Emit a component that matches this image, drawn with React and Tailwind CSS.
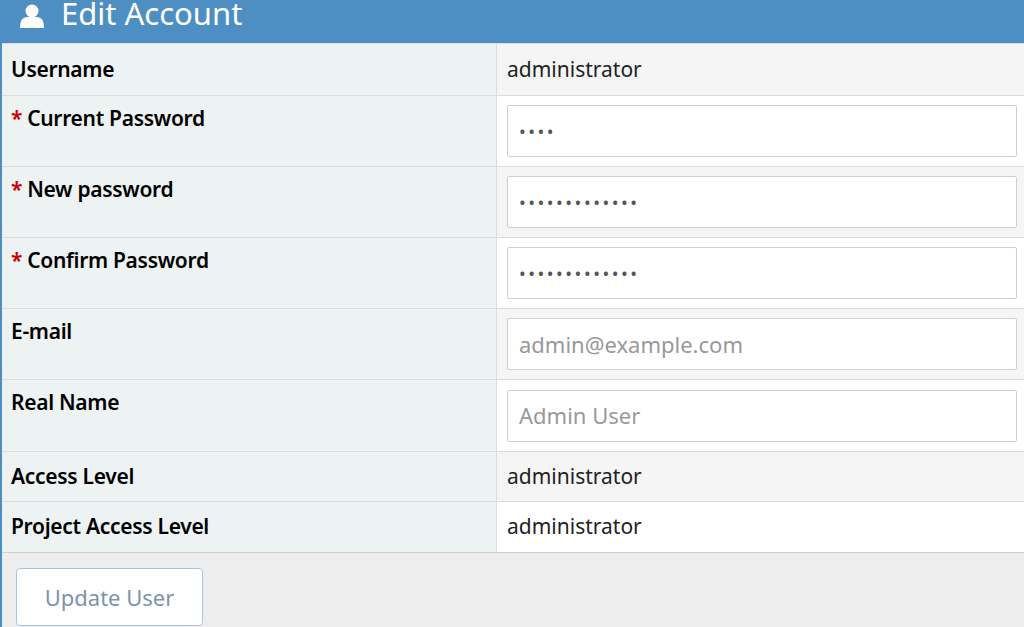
export default function App() {
  const rows = [
    { label: "Username", value: "administrator", h: "h-[52px]", bg: "bg-[#f5f5f5]" },
    { label: "Current Password", req: true, input: "••••", dots: true, h: "h-[71px]", bg: "bg-white" },
    { label: "New password", req: true, input: "•••••••••••••", dots: true, h: "h-[71px]", bg: "bg-[#f5f5f5]" },
    { label: "Confirm Password", req: true, input: "•••••••••••••", dots: true, h: "h-[71px]", bg: "bg-white" },
    { label: "E-mail", input: "admin@example.com", h: "h-[71px]", bg: "bg-[#f5f5f5]" },
    { label: "Real Name", input: "Admin User", h: "h-[72px]", bg: "bg-white" },
    { label: "Access Level", value: "administrator", h: "h-[50px]", bg: "bg-[#f5f5f5]" },
    { label: "Project Access Level", value: "administrator", h: "h-[51px]", bg: "bg-white" },
  ];
  return (
    <div className="w-[1024px] h-[627px] overflow-hidden bg-[#ededed] font-['Open_Sans',sans-serif] border-l-2 border-[#4a8ec2]">
      <div className="h-[43px] bg-[#4e8fc3] flex items-center pl-[17px] gap-[16px] text-white overflow-hidden">
        <svg width="26" height="24" viewBox="0 0 26 24" className="-mt-3"><circle cx="13" cy="7" r="6.5" fill="white"/><path d="M1 24 Q1 13 8 13 L18 13 Q25 13 25 24 Z" fill="white"/></svg>
        <span className="text-[31px] leading-none -mt-4">Edit Account</span>
      </div>
      {rows.map((r, i) => (
        <div key={i} className={`flex ${r.h} border-t border-[#dcdcdc]`}>
          <div className={`w-[495px] bg-[#edf3f3] border-r border-[#dcdcdc] pl-[9px] text-[21px] font-semibold tracking-[-0.3px] text-black ${r.input ? "pt-[7px]" : "flex items-center"}`}>
            {r.req && <span className="text-[#cc0000] mr-[5px]">*</span>}{r.label}
          </div>
          <div className={`flex-1 ${r.bg} pl-[10px] pr-[7px] flex items-center text-[21px] text-[#222]`}>
            {r.input ? (
              <div className={`w-full h-[52px] bg-white border border-[#cfcfcf] rounded-[2px] flex items-center pl-[11px] ${r.dots ? "text-[#555] text-[18px] tracking-[2.5px]" : "text-[#999] text-[22px]"}`}>{r.input}</div>
            ) : r.value}
          </div>
        </div>
      ))}
      <div className="border-t border-[#cfcfcf] pl-[14px] pt-[15px]">
        <button className="w-[187px] h-[58px] bg-white border border-[#a8c4dc] rounded-[4px] text-[#7b93ad] text-[22px]">Update User</button>
      </div>
    </div>
  );
}
